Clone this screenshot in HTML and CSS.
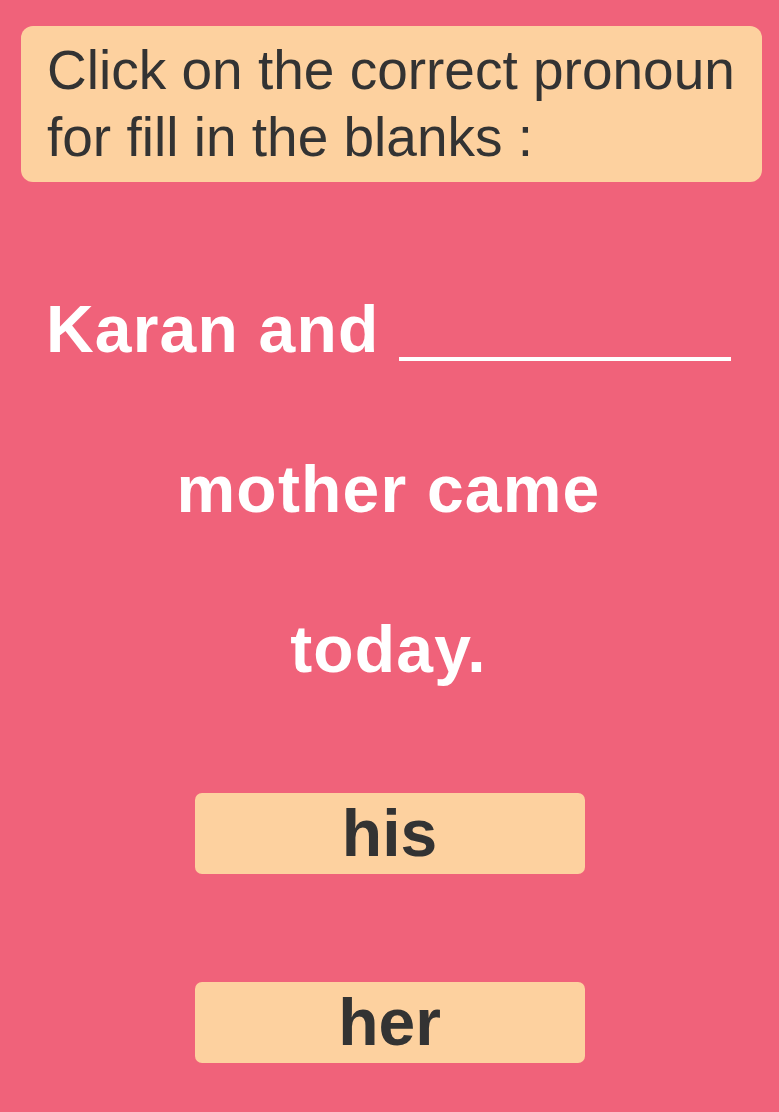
FILE: index.html
```html
<!DOCTYPE html>
<html lang="en">
<head>
<meta charset="utf-8">
<title>Pronoun quiz</title>
<link rel="stylesheet" href="styles.css">
</head>
<body>
<main class="quiz">
  <header class="prompt">Click on the correct pronoun for fill in the blanks :</header>
  <p class="sentence">
    <span class="line">Karan and <span class="blank"></span></span>
    <span class="line">mother came</span>
    <span class="line">today.</span>
  </p>
  <div class="options">
    <button class="option" type="button">his</button>
    <button class="option" type="button">her</button>
  </div>
</main>
</body>
</html>
```

FILE: styles.css
```css
html, body {
  margin: 0;
  padding: 0;
  background: #f0627a;
}

body {
  width: 779px;
  height: 1112px;
  overflow: hidden;
  font-family: "Liberation Sans", Arial, sans-serif;
}

.quiz {
  display: flex;
  flex-direction: column;
  padding: 26px 17px 0 21px;
}

.prompt {
  background: #fdd19f;
  color: #333333;
  border-radius: 12px;
  font-size: 55px;
  line-height: 67px;
  padding: 11px 20px 11px 26px;
}

.sentence {
  margin: 67px 0 0 0;
  padding-right: 6px;
  color: #ffffff;
  font-weight: bold;
  font-size: 66px;
  line-height: 160px;
  text-align: center;
  letter-spacing: 1.2px;
}

.line {
  display: block;
}

.blank {
  display: inline-block;
  width: 332px;
  height: 0;
  border-bottom: 4px solid #ffffff;
  vertical-align: -9px;
}

.options {
  display: flex;
  flex-direction: column;
  align-items: center;
  gap: 108px;
  margin-top: 64px;
  margin-right: -17px;
  margin-left: -21px;
}

.option {
  width: 390px;
  height: 81px;
  padding: 0;
  border: none;
  border-radius: 7px;
  background: #fdd19f;
  color: #333333;
  font-family: "Liberation Sans", Arial, sans-serif;
  font-weight: bold;
  font-size: 66px;
  line-height: 71px;
  cursor: pointer;
}
```
